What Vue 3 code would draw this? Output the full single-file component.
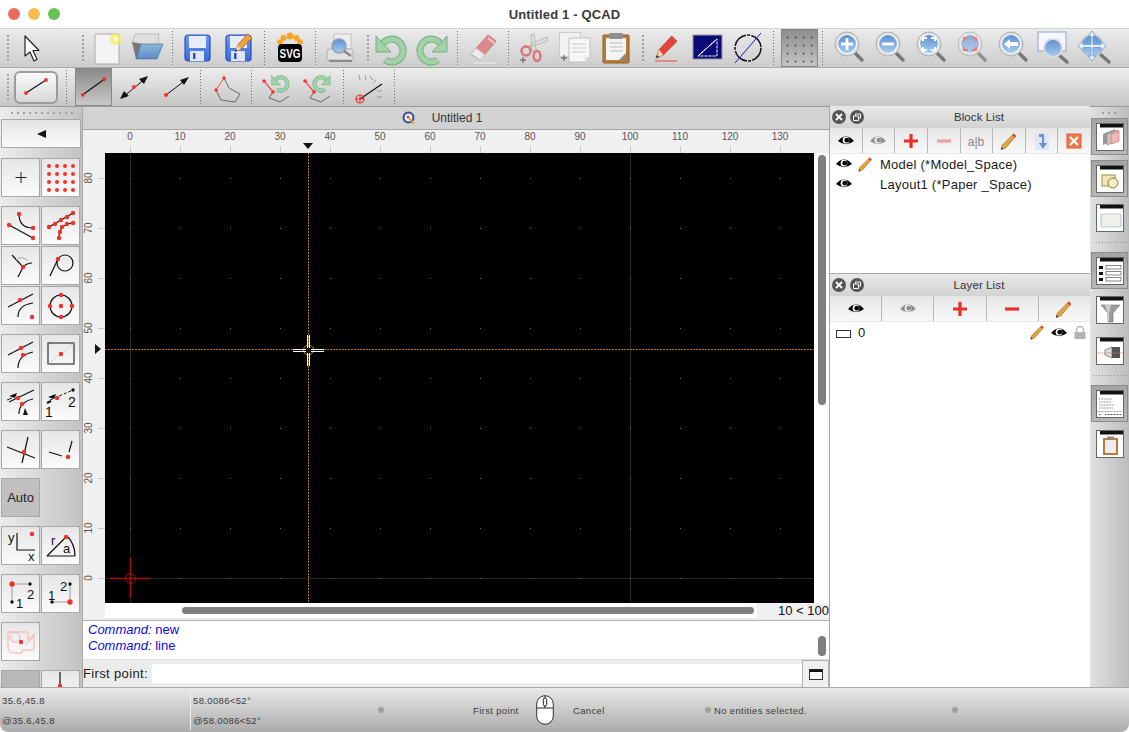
<script setup>
const dot = (x, y, r = 2.2) => `<circle cx="${x}" cy="${y}" r="${r}" fill="#f4302a"/>`
const blk = (x, y, r = 1.7) => `<circle cx="${x}" cy="${y}" r="${r}" fill="#111"/>`
const ln = (d, w = 1.2, c = '#111', extra = '') => `<path d="${d}" fill="none" stroke="${c}" stroke-width="${w}" ${extra}/>`
const txt = (x, y, s, size = 13, c = '#111') => `<text x="${x}" y="${y}" font-size="${size}" fill="${c}" font-family="Liberation Sans, sans-serif">${s}</text>`

const mag = (g, op = 1) => `<g opacity="${op}"><path d="M25 23l7 7" stroke="#777" stroke-width="3.5" stroke-linecap="round"/><circle cx="17" cy="14" r="12" fill="#dcdcdc" stroke="#b0b0b0"/><circle cx="17" cy="14" r="9.5" fill="url(#lens)" stroke="#f4f8fc" stroke-width="1.2"/>${g}</g>`

const floppy = `<rect x="5" y="5" width="25" height="26" rx="3" fill="url(#floppy)" stroke="#2c4cc0" stroke-width="1.2"/><rect x="9" y="6" width="17" height="12" fill="#e6eefb"/><rect x="10" y="21" width="14" height="10" fill="#dfe6f2"/><rect x="13" y="23" width="2.5" height="6" fill="#2c4cc0"/>`
const pencil = (x, y, s = 1, body = '#e8403a') => `<g transform="translate(${x} ${y}) scale(${s})"><path d="M0 22l3-8L15 1l5 5L7 19z" fill="${body}" stroke="#8a4a20" stroke-width=".7"/><path d="M0 22l3-8 4 5z" fill="#f0d5a8"/><path d="M0 22l1-3 2 2z" fill="#222"/></g>`
const oPencil = (x, y, s = 1) => `<g transform="translate(${x} ${y}) scale(${s})"><path d="M0 22l2-6L17 1l3 3L6 20z" fill="#e8a53a" stroke="#8a5a20" stroke-width=".8"/><path d="M17 1l3 3-2 2-3-3z" fill="#e0403a"/><path d="M0 22l1-3 2 2z" fill="#222"/></g>`
const undo = `<g>${ln('M12 30a11.5 11.5 0 1 0 -2 -17', 7, '#74ab80')}${ln('M12 30a11.5 11.5 0 1 0 -2 -17', 5, '#a2d2a8')}<path d="M3 6v16h15z" fill="#a2d2a8" stroke="#74ab80"/></g>`
const redo = `<g transform="translate(36 0) scale(-1 1)">${undo}</g>`
const tail = `${ln('M14 23l-4 6 11 4 9-6', 1, '#666')}${ln('M5 12L14 23', 1.2, '#f05050')}${dot(5, 12, 1.8)}${dot(14, 23, 1.8)}`

const icons = {
  arrow: '<path d="M12 6v20l5-4 4 9 3-1.5-4-9h6z" fill="#fff" stroke="#222" stroke-width="1.2" stroke-linejoin="round"/>',
  new: '<rect x="7" y="4" width="24" height="30" rx="1" fill="#f4f4f4" stroke="#aaa"/><circle cx="28" cy="9" r="6" fill="#f4ee5a" opacity=".75"/><circle cx="28" cy="9" r="2.5" fill="#fffbd0"/>',
  open: '<path d="M3 14l3-10h24l-1 11z" fill="#dedede" stroke="#aaa" stroke-width=".7"/><path d="M3 12l4 17h3l4-15z" fill="#777"/><path d="M12 14h22l-6 15H7z" fill="url(#folder)" stroke="#44688f" stroke-width=".6"/>',
  save: floppy,
  saveas: floppy + pencil(14, 3, .85, '#efa23a'),
  svg: '<g fill="#f6a623"><circle cx="18" cy="6" r="3.5"/><circle cx="11.5" cy="8" r="3"/><circle cx="24.5" cy="8" r="3"/><circle cx="8" cy="12" r="2.8"/><circle cx="28" cy="12" r="2.8"/></g><rect x="6" y="14" width="24" height="18" rx="4" fill="#000"/><text x="18" y="28" text-anchor="middle" font-size="12.5" font-weight="700" fill="#fff" font-family="Liberation Sans, sans-serif" textLength="21" lengthAdjust="spacingAndGlyphs">SVG</text>',
  print: '<rect x="11" y="4" width="17" height="15" fill="#eee" stroke="#c4c4c4"/><path d="M4 22q0-3 3-3h20q3 0 3 3v8H4z" fill="#e2e2e2" stroke="#b0b0b0"/><rect x="6" y="30" width="23" height="2" fill="#8c8c8c"/><circle cx="16" cy="16" r="7" fill="url(#lens)" stroke="#8da0b8" stroke-width="1.5"/><path d="M21 21l7 5" stroke="#888" stroke-width="2.5"/>',
  undo, redo,
  eraser: '<g opacity=".8"><path d="M6 24L23 5l8 6-16 19z" fill="#dd7478" stroke="#c06066"/><path d="M23 8l6 5" stroke="#f4c4c4" stroke-width="2"/><path d="M6 24l5-6 9 7-5 5z" fill="#f0f0f0" stroke="#bbb"/><path d="M8 33h24" stroke="#e8e8e8" stroke-width="1.5"/></g>',
  scissors: '<path d="M13 17L32 11l-1-4-16 7zM20 21L18 4l-3 1 1 16z" fill="#dedede" stroke="#aaa" stroke-width=".7"/><circle cx="10" cy="21" r="4.5" fill="none" stroke="#d87478" stroke-width="2.4"/><ellipse cx="21" cy="26" rx="3.4" ry="5" fill="none" stroke="#d87478" stroke-width="2.4"/><path d="M4 30h6M7 27v6" stroke="#555"/>',
  copy: '<rect x="2.5" y="2.5" width="21" height="24" fill="#f2f2f2" stroke="#ccc"/><path d="M12 8h21v19l-5 5H12z" fill="#f6f6f6" stroke="#c0c0c0"/><path d="M15 14h14M15 18h14M15 22h14" stroke="#ccc"/><path d="M28 32v-5h5z" fill="#ddd"/><path d="M4 28h6M7 25v6" stroke="#555"/>',
  paste: '<rect x="5" y="5" width="26" height="28" rx="1" fill="#b87c3a" stroke="#8e5c24"/><rect x="8" y="8" width="20" height="22" fill="#f4f4f4"/><rect x="11" y="3" width="14" height="6" rx="1" fill="#8f8f8f"/><path d="M12 13h13M12 17h13M12 21h13" stroke="#bbb"/><path d="M21 30l7-7v7z" fill="#888"/>',
  pencil: pencil(8, 5, 1.05) + '<path d="M7 31h22" stroke="#e8403a" stroke-width="1"/>',
  ruler: '<rect x="4" y="5" width="29" height="24" fill="#0a0a78" stroke="#999"/><path d="M9 26L28 9v17z" fill="none" stroke="#fff" stroke-width="1" stroke-dasharray="3 1"/><path d="M9 26L28 9" stroke="#fff"/>',
  circle: '<circle cx="18" cy="18" r="13" fill="none" stroke="#111" stroke-width="1.5" stroke-dasharray="16 1.2 3 1.2"/><path d="M5 33L31 3" stroke="#1515e8"/>',
  gridOn: Array.from({ length: 16 }, (_, i) => `<rect x="${5 + (i % 4) * 8.5}" y="${6 + Math.floor(i / 4) * 8.5}" width="1.6" height="1.6" fill="#333"/>`).join(''),
  zin: mag('<path d="M17 8v12M11 14h12" stroke="#fff" stroke-width="2.8"/>'),
  zout: mag('<path d="M11 14h12" stroke="#fff" stroke-width="2.8"/>'),
  zauto: mag('<path d="M11 11V8h4M19 8h4v3M23 17v3h-4M15 20h-4v-3" fill="none" stroke="#fff" stroke-width="2"/>'),
  zsel: mag('<path d="M11 11V8h4M19 8h4v3M23 17v3h-4M15 20h-4v-3" fill="none" stroke="#f05050" stroke-width="2"/>', .7),
  zback: mag('<path d="M10 14l6-5v3h8v4h-8v3z" fill="#fff"/>'),
  zwin: '<rect x="3" y="2" width="28" height="19" fill="#f4f6fb" stroke="#8da4c8"/><path d="M25 26l7 6" stroke="#777" stroke-width="3.5" stroke-linecap="round"/><circle cx="18" cy="18" r="9" fill="url(#lens)" stroke="#dcdcdc" stroke-width="2"/>',
  zpan: '<path d="M25 25l8 7" stroke="#777" stroke-width="3.5" stroke-linecap="round"/><circle cx="16" cy="16" r="11" fill="url(#lens)" stroke="#c4c4c4" stroke-width="1.5"/><path d="M16 1l4 5h-3v8.5h8v-3l5 4.5-5 4.5v-3h-8V26h3l-4 5-4-5h3v-8.5H7v3L2 16l5-4.5v3h8V6h-3z" fill="#e6eefa" stroke="#6d94c8" stroke-width=".8"/>',

  lineBig: `${ln('M12 22L32 9')}${dot(12, 22, 1.9)}${dot(32, 9, 1.9)}`,
  line2p: `${ln('M7 26L29 10')}${dot(7, 26, 2)}${dot(29, 10, 2)}`,
  lineMid: `${ln('M6 29L30 9', 1)}<path d="M4 30l9-3-5-5zM32 7l-9 3 5 5z" fill="#111"/>${dot(18, 18, 2)}`,
  lineDir: `${ln('M9 26L30 10', 1)}<path d="M32 8l-9 3 4 5z" fill="#111"/>${dot(9, 26, 2)}`,
  polyline: `${ln('M16 9L8 21', 1, '#f05050')}${ln('M8 21l5 10 14 2 5-8-11-6-5-10', 1, '#666')}${dot(16, 9, 1.7)}${dot(8, 21, 1.7)}`,
  backH: `<g transform="translate(11 3) scale(.58)">${undo}</g>${tail}`,
  fwdH: `<g transform="translate(11 3) scale(.58)">${redo}</g>${tail}`,
  snapAng: `${ln('M9 30L31 15')}<circle cx="9" cy="30" r="4" fill="none" stroke="#f4302a" stroke-width="1.2"/><path d="M9 26v8M5 30h8" stroke="#f4302a"/><path d="M8 6l1 5M14 6l1 5M19 7l2.5 4M25 11l-3 3M31 22h-5M31 28h-5" stroke="#999"/>`,

  free: ln('M20 14v11M14.5 19.5h11', 1, '#222'),
  snapGrid: Array.from({ length: 16 }, (_, i) => dot(8 + (i % 4) * 8, 8 + Math.floor(i / 4) * 8, 2)).join(''),
  ends: `${ln('M8 19L32 32')}${ln('M18 8q0 14 14 14')}${dot(8, 19)}${dot(32, 32)}${dot(18, 8)}${dot(32, 22)}`,
  points: `${ln('M8 21L32 7')}${ln('M18 32q0-14 14-15')}${[[8, 21], [14, 18], [20, 14], [26, 11], [32, 7], [18, 32], [19, 26], [21, 21], [26, 18], [32, 17]].map(p => dot(p[0], p[1])).join('')}`,
  inter: `${ln('M11 9L22 21L17 31', 1.2)}${ln('M22 21q4-4 9-4', 1.2)}${ln('M15 14a8 8 0 0 1 12 1', 1, '#aaa')}${dot(22, 21)}`,
  tan: `<circle cx="24" cy="17" r="8" fill="none" stroke="#111" stroke-width="1.2"/>${ln('M9 30L17 13', 1.2)}${dot(17, 13)}`,
  perp: `${ln('M7 21L32 8')}${ln('M17 31q0-12 15-14')}${dot(19, 14)}${dot(31, 31)}`,
  centers: `<circle cx="20" cy="20" r="11" fill="none" stroke="#111" stroke-width="1.2"/>${dot(20, 20)}${dot(20, 9)}${dot(20, 31)}${dot(9, 20)}${dot(31, 20)}`,
  middle: `${ln('M7 21L32 8')}${ln('M17 34q0-13 15-16')}${dot(20, 14)}${dot(22, 21)}`,
  rectc: `<rect x="7" y="9" width="26" height="21" fill="none" stroke="#333" stroke-width="1.2"/>${ln('M7 30L33 9', .8, '#aaa', 'stroke-dasharray="2 2"')}${dot(20, 20)}`,
  dist: `${ln('M8 20L33 8')}${ln('M18 32q0-12 14-15')}<path d="M8 14l8-3-2 5z" fill="#111"/><path d="M6 18l5-2" stroke="#111"/><path d="M24 26l3 7h-5z" fill="#111"/>${dot(17, 16)}${dot(21, 22)}`,
  dist2: `${ln('M9 18L32 8', 1, '#111', 'stroke-dasharray="3 2"')}<path d="M7 15l8-3-2 5z" fill="#111"/><path d="M6 21l4-2" stroke="#111" stroke-width="2"/>${blk(32, 8)}${dot(16, 16)}${txt(27, 25, '2', 14)}${txt(4, 35, '1', 14)}`,
  cross: `${ln('M6 17L34 28')}${ln('M27 7L21 33')}${dot(23, 22)}`,
  along: `${ln('M8 22L21 26')}${ln('M31 11L28 22')}${dot(27, 27)}`,
  coord: `${ln('M16 7V24H34')}${dot(31, 8)}${txt(7, 16, 'y', 13)}${txt(27, 35, 'x', 13)}`,
  polar: `${ln('M6 30L26 10')}${ln('M6 30H34M26 10q8 8 8 20')}${dot(25, 11)}${txt(10, 19, 'r', 13)}${txt(22, 27, 'a', 13)}`,
  rel1: `${ln('M11 10H29M11 10V28', .8, '#888')}${dot(11, 10, 2.7)}${blk(29, 10)}${blk(11, 28)}${txt(26, 25, '2')}${txt(15, 34, '1')}`,
  rel2: `${ln('M29 10V28H11', .8, '#888')}${dot(29, 28, 2.7)}${blk(29, 10)}${blk(11, 28)}${txt(19, 17, '2')}${txt(7, 26, '1')}`,
  restrict: `<path d="M7 10h20v8l6-6v16H21v3H13q-6 0-6-6z" fill="none" stroke="#f4b0ac"/><circle cx="14" cy="15" r="5" fill="none" stroke="#f4b0ac"/><path d="M24 23l9-9" stroke="#f4b0ac"/>${dot(20, 20)}`,
  tick: `${ln('M19 2v12', 1.2)}${dot(19, 16)}`,

  plus: '<path d="M4 10h14M11 3v14" stroke="#e8302a" stroke-width="3.2"/>',
  minus: '<path d="M4 10h14" stroke="#e8302a" stroke-width="3.2"/>',
  rename: `<text x="11" y="15" text-anchor="middle" font-size="12" fill="#888" font-family="Liberation Sans, sans-serif">a|b</text>`,
  edit: oPencil(3, 2, .75),
  editRow: oPencil(1, 0, .95),
  insert: '<rect x="4" y="2" width="14" height="17" fill="#dfe6f5"/><path d="M8 3h5v9h3l-4 6-4-6h3V6H8z" fill="#6c8fd8"/>',
  del: '<rect x="4" y="3" width="14" height="14" fill="#ee7a4c" stroke="#d95c30"/><path d="M7 6l8 8M15 6l-8 8" stroke="#fff" stroke-width="2.2"/>',
  lock: '<path d="M3.5 7V5a3.5 3.5 0 0 1 7 0v2" fill="none" stroke="#b4b4b4" stroke-width="1.5"/><rect x="1.5" y="7" width="11" height="7" fill="#b4b4b4"/>',

  win1: '<path d="M7 22V11l12-5v11z" fill="#999"/><path d="M11 22V11l11-4v11z" fill="#c8c8c8" stroke="#888" stroke-width=".6"/><path d="M15 21V11l8-3v10z" fill="#f0b8b8" stroke="#e06060" stroke-width=".6"/>',
  win2: '<rect x="6" y="10" width="13" height="11" fill="#f2e6b4" stroke="#9a8c50"/><circle cx="17" cy="18" r="5" fill="#f4ecc8" stroke="#8a7c40"/>',
  win3: '<rect x="5" y="10" width="20" height="13" rx="2" fill="#f0f0ea" stroke="#b4c8e6" stroke-width="1.2"/>',
  win4: '<g fill="#111"><rect x="3" y="9" width="4" height="3"/><rect x="3" y="15" width="4" height="3"/><rect x="3" y="21" width="4" height="3"/></g><g fill="#fff" stroke="#555" stroke-width=".7"><rect x="10" y="8.5" width="15" height="3.5"/><rect x="10" y="14.5" width="15" height="3.5"/><rect x="10" y="20.5" width="15" height="3.5"/></g>',
  win5: '<path d="M5 9h19l-7 8v9h-5v-9z" fill="#9c9c9c" stroke="#777" stroke-width=".6"/><path d="M9 9h6l-2 8v8h-1v-8z" fill="#d0d0d0"/>',
  win6: '<path d="M9 13l7-3v11l-7-3z" fill="#ddd" stroke="#666" stroke-width=".7"/><rect x="16" y="10" width="8" height="11" fill="#555"/><path d="M2 16h25" stroke="#ee7070" stroke-width=".8" stroke-dasharray="2 1"/>',
  win7: '<g stroke="#777" stroke-width=".9" stroke-dasharray="1 .6"><path d="M3 9h13M3 12h12M3 15h15M3 18h14"/></g><path d="M1 21.5h25" stroke="#777" stroke-width=".5"/><path d="M3 24.5h2M9 24.5h16" stroke="#555" stroke-dasharray="1 .5"/>',
  win8: '<rect x="7" y="8" width="15" height="17" fill="#b87c3a"/><rect x="9" y="10" width="11" height="13" fill="#eee"/><rect x="11" y="6.5" width="7" height="3" fill="#888"/>'
}

const topBar = ['handle0', 'arrow', 'gap', 'handleS', 'new', 'open', '|', 'save', 'saveas', '|', 'svg', '|', 'print', ':', 'undo', 'redo', '|', 'eraser', '|', 'scissors', 'copy', 'paste', ':', 'pencil', 'ruler', 'circle', '|', 'gridOn', '|', 'zin', 'zout', 'zauto', 'zsel', 'zback', 'zwin', 'zpan']
const secondBar = ['line2p', 'lineMid', 'lineDir', '|', 'polyline', '|', 'backH', 'fwdH', '|', 'snapAng', '|']

const toolGroups = [
  ['free', 'snapGrid'],
  ['ends', 'points', 'inter', 'tan', 'perp', 'centers'],
  ['middle', 'rectc'],
  ['dist', 'dist2'],
  ['cross', 'along'],
  ['AUTO'],
  ['coord', 'polar'],
  ['rel1', 'rel2'],
  ['restrict'],
  ['GRAY', 'tick']
]

const blockTools = [['eye'], ['eye', true], ['plus'], ['minus', true], ['rename'], ['edit'], ['insert'], ['del']]
const layerTools = [['eye'], ['eye', true], ['plus'], ['minus'], ['edit']]

const rightStrip = [
  { g: 'win1', on: true, mb: 5 }, { g: 'win2', on: true, mb: 7 }, { g: 'win3', mb: 0 }, { sep: true },
  { g: 'win4', on: true, mb: 7 }, { g: 'win5', mb: 13 }, { g: 'win6', mb: 0 }, { sep: true },
  { g: 'win7', on: true, mb: 8 }, { g: 'win8', mb: 0 }
]

const xTicks = Array.from({ length: 14 }, (_, i) => i * 10)
const yTicks = Array.from({ length: 9 }, (_, i) => i * 10)
const toX = v => 25 + v * 5
const toY = v => 425 - v * 5
const dots = []
for (let x = -10; x <= 130; x += 10) {
  for (const y of yTicks) dots.push([toX(x), toY(y)])
}
</script>

<template>
  <div class="app">
    <svg class="defs" width="0" height="0">
      <defs>
        <linearGradient id="lens" x1="0" y1="0" x2="0" y2="1">
          <stop offset="0" stop-color="#5b8fd0" />
          <stop offset="1" stop-color="#a8cdf0" />
        </linearGradient>
        <linearGradient id="floppy" x1="0" y1="0" x2="0" y2="1">
          <stop offset="0" stop-color="#6c9cec" />
          <stop offset="1" stop-color="#3a6bd8" />
        </linearGradient>
        <linearGradient id="folder" x1="0" y1="0" x2="0" y2="1">
          <stop offset="0" stop-color="#8fb6dd" />
          <stop offset="1" stop-color="#5a8cc4" />
        </linearGradient>
      </defs>
    </svg>

    <header class="titlebar">
      <div class="lights">
        <span class="light red"></span>
        <span class="light yellow"></span>
        <span class="light green"></span>
      </div>
      <span class="title">Untitled 1 - QCAD</span>
    </header>

    <div class="toolbar">
      <template v-for="(it, i) in topBar" :key="i">
        <span v-if="it === '|'" class="sep"></span>
        <span v-else-if="it === 'handle0'" class="handle"></span>
        <span v-else-if="it === ':'" class="handle mid"></span>
        <span v-else-if="it === 'handleS'" class="handle small"></span>
        <span v-else-if="it === 'gap'" class="gap"></span>
        <span v-else-if="it === 'gridOn'" class="tbtn grid-on">
          <svg width="37" height="37" viewBox="0 0 37 37" v-html="icons[it]"></svg>
        </span>
        <span v-else class="tbtn">
          <svg width="36" height="36" viewBox="0 0 36 36" v-html="icons[it]"></svg>
        </span>
      </template>
    </div>

    <div class="toolbar second">
      <span class="handle"></span>
      <span class="big-btn">
        <svg width="44" height="33" viewBox="0 0 44 33" v-html="icons.lineBig"></svg>
      </span>
      <span class="sep wide"></span>
      <template v-for="(it, i) in secondBar" :key="i">
        <span v-if="it === '|'" class="sep"></span>
        <span v-else class="tbtn" :class="{ checked: i === 0 }">
          <svg width="36" height="36" viewBox="0 0 36 36" v-html="icons[it]"></svg>
        </span>
      </template>
    </div>

    <main class="workspace">
      <aside class="tools">
        <div class="dots-row"></div>
        <button class="back-btn"><span class="back-tri"></span></button>
        <div v-for="(group, g) in toolGroups" :key="g" class="tool-group">
          <template v-for="name in group" :key="name">
            <button v-if="name === 'AUTO'" class="tool auto">Auto</button>
            <button v-else-if="name === 'GRAY'" class="tool gray"></button>
            <button v-else class="tool">
              <svg width="39" height="39" viewBox="0 0 39 39" v-html="icons[name]"></svg>
            </button>
          </template>
        </div>
      </aside>

      <section class="center">
        <div class="mdi-title">
          <svg class="mdi-icon" width="14" height="14" viewBox="0 0 14 14">
            <circle cx="6.5" cy="6.5" r="5" fill="#e4e8ee" stroke="#2f4f8c" stroke-width="2" />
            <path d="M6 6l6 7" stroke="#e89a28" stroke-width="1.8" />
            <circle cx="6" cy="6" r="1.2" fill="#d04030" />
          </svg>
          <span>Untitled 1</span>
        </div>

        <div class="view">
          <div class="corner"></div>
          <svg class="ruler-top" width="709" height="23" viewBox="0 0 709 23">
            <g v-for="v in xTicks" :key="v">
              <text :x="toX(v)" y="10" text-anchor="middle">{{ v }}</text>
              <path :d="`M${toX(v) + .5} 16V23`" stroke="#c8c8c8" />
            </g>
            <path d="M198 13h10l-5 6z" fill="#111" />
          </svg>
          <div class="ruler-fill"></div>

          <svg class="ruler-left" width="22" height="450" viewBox="0 0 22 450">
            <g v-for="v in yTicks" :key="v">
              <text :transform="`translate(9 ${toY(v)}) rotate(-90)`" text-anchor="middle">{{ v }}</text>
              <path :d="`M15 ${toY(v) + .5}H22`" stroke="#c8c8c8" />
            </g>
            <path d="M12 191l6 5-6 5z" fill="#111" />
          </svg>

          <svg class="canvas" width="709" height="450" viewBox="0 0 709 450">
            <rect width="709" height="450" fill="#000" />
            <path d="M25.5 0V450M0 425.5H709" stroke="#262626" />
            <path d="M525.5 0V450" stroke="#2a2a2a" />
            <rect v-for="(d, i) in dots" :key="i" :x="d[0]" :y="d[1]" width="1" height="1" fill="#6a6a6a" />
            <path d="M203.5 0V450M0 196.5H709" stroke="#b07410" stroke-dasharray="2 1" />
            <path d="M25.5 405V445M5 425.5H45" stroke="#a51010" stroke-width="1.5" />
            <circle cx="25.5" cy="425.5" r="5" fill="none" stroke="#a51010" />
            <circle cx="203.5" cy="197" r="5" fill="none" stroke="#c08a20" />
            <path d="M188 196.5H219M188 198.5H219M202.5 182V213M204.5 182V213" stroke="#fff" />
            <rect x="201" y="195" width="5" height="5" fill="#1a1208" />
          </svg>

          <div class="vscroll"><span class="vthumb"></span></div>

          <div class="hscroll">
            <div class="hfill"></div>
            <div class="htrack"><span class="hthumb"></span></div>
            <span class="zoom-label">10 &lt; 100</span>
          </div>
        </div>

        <div class="history">
          <div class="history-text">
            <div><em>Command:</em> new</div>
            <div><em>Command:</em> line</div>
          </div>
          <div class="history-scroll"><span class="history-thumb"></span></div>
        </div>

        <div class="command-line">
          <label>First point:</label>
          <div class="command-input"></div>
          <button class="command-btn">
            <svg width="14" height="11" viewBox="0 0 14 11">
              <rect x=".5" y=".5" width="13" height="10" fill="#fff" stroke="#333" />
              <rect x=".5" y=".5" width="13" height="2.5" fill="#111" />
            </svg>
          </button>
        </div>
      </section>

      <aside class="docks">
        <section class="dock block-dock">
          <div class="dock-head">
            <span class="round-btn"><svg width="10" height="10" viewBox="0 0 10 10"><path d="M2 2l6 6M8 2l-6 6" stroke="#fff" stroke-width="1.8" /></svg></span>
            <span class="round-btn"><svg width="10" height="10" viewBox="0 0 10 10"><path d="M1.5 4h5v4.5h-5zM3.5 3.5V2h5v4H7" fill="none" stroke="#fff" /></svg></span>
            <span class="dock-title">Block List</span>
          </div>
          <div class="dock-tools eight">
            <button v-for="(t, i) in blockTools" :key="i" class="dbtn">
              <svg v-if="t[0] === 'eye'" :class="{ faded: t[1] }" width="16" height="12" viewBox="0 0 20 14">
                <path d="M0 7Q10-4 20 7 10 15 0 7z" fill="#000" />
                <circle cx="10" cy="6" r="4.2" fill="#fff" />
                <circle cx="11" cy="6" r="3" fill="#000" />
              </svg>
              <svg v-else :class="{ faded: t[1] }" width="22" height="20" viewBox="0 0 22 20" v-html="icons[t[0]]"></svg>
            </button>
          </div>
          <ul class="dock-list">
            <li>
              <svg width="16" height="12" viewBox="0 0 20 14"><path d="M0 7Q10-4 20 7 10 15 0 7z" fill="#000" /><circle cx="10" cy="6" r="4.2" fill="#fff" /><circle cx="11" cy="6" r="3" fill="#000" /></svg>
              <svg class="list-pencil" width="15" height="15" viewBox="0 0 22 22" v-html="icons.editRow"></svg>
              <span>Model (*Model_Space)</span>
            </li>
            <li>
              <svg width="16" height="12" viewBox="0 0 20 14"><path d="M0 7Q10-4 20 7 10 15 0 7z" fill="#000" /><circle cx="10" cy="6" r="4.2" fill="#fff" /><circle cx="11" cy="6" r="3" fill="#000" /></svg>
              <span class="list-pencil"></span>
              <span>Layout1 (*Paper _Space)</span>
            </li>
          </ul>
        </section>

        <section class="dock layer-dock">
          <div class="dock-head">
            <span class="round-btn"><svg width="10" height="10" viewBox="0 0 10 10"><path d="M2 2l6 6M8 2l-6 6" stroke="#fff" stroke-width="1.8" /></svg></span>
            <span class="round-btn"><svg width="10" height="10" viewBox="0 0 10 10"><path d="M1.5 4h5v4.5h-5zM3.5 3.5V2h5v4H7" fill="none" stroke="#fff" /></svg></span>
            <span class="dock-title">Layer List</span>
          </div>
          <div class="dock-tools five">
            <button v-for="(t, i) in layerTools" :key="i" class="dbtn">
              <svg v-if="t[0] === 'eye'" :class="{ faded: t[1] }" width="16" height="12" viewBox="0 0 20 14">
                <path d="M0 7Q10-4 20 7 10 15 0 7z" fill="#000" />
                <circle cx="10" cy="6" r="4.2" fill="#fff" />
                <circle cx="11" cy="6" r="3" fill="#000" />
              </svg>
              <svg v-else width="22" height="20" viewBox="0 0 22 20" v-html="icons[t[0]]"></svg>
            </button>
          </div>
          <div class="layer-row">
            <span class="swatch"></span>
            <span class="layer-name">0</span>
            <svg width="15" height="15" viewBox="0 0 22 22" v-html="icons.editRow"></svg>
            <svg class="layer-eye" width="16" height="12" viewBox="0 0 20 14"><path d="M0 7Q10-4 20 7 10 15 0 7z" fill="#000" /><circle cx="10" cy="6" r="4.2" fill="#fff" /><circle cx="11" cy="6" r="3" fill="#000" /></svg>
            <svg width="14" height="14" viewBox="0 0 14 14" v-html="icons.lock"></svg>
          </div>
        </section>
      </aside>

      <aside class="strip">
        <div class="dots-row short"></div>
        <template v-for="(b, i) in rightStrip" :key="i">
          <div v-if="b.sep" class="strip-sep"></div>
          <button v-else class="strip-btn" :class="{ on: b.on }" :style="{ marginBottom: b.mb + 'px' }">
            <svg width="28" height="28" viewBox="0 0 28 28">
              <rect x=".5" y=".5" width="27" height="27" fill="#fff" stroke="#666" />
              <rect x="4" y="1" width="23" height="3.5" fill="#111" />
              <g v-html="icons[b.g]"></g>
            </svg>
          </button>
        </template>
      </aside>
    </main>

    <footer class="status">
      <div class="coords first">
        <span>35.6,45.8</span>
        <span>@35.6,45.8</span>
      </div>
      <div class="coords second-col">
        <span>58.0086&lt;52°</span>
        <span>@58.0086&lt;52°</span>
      </div>
      <span class="led led-a"></span>
      <span class="mouse-l">First point</span>
      <svg class="mouse" width="18" height="30" viewBox="0 0 18 30">
        <rect x=".7" y=".7" width="16.6" height="28.6" rx="8.3" fill="#fff" stroke="#333" />
        <path d="M1 13h16M9 1v12" stroke="#222" />
        <rect x="7.3" y="3" width="3.4" height="8" rx="1.7" fill="#fff" stroke="#222" />
      </svg>
      <span class="mouse-r">Cancel</span>
      <span class="led led-b"></span>
      <span class="sel">No entities selected.</span>
      <span class="led led-c"></span>
    </footer>
  </div>
</template>

<style>
html, body {
  margin: 0;
  background: #fff;
}
</style>

<style scoped>
.app {
  width: 1129px;
  height: 732px;
  display: flex;
  flex-direction: column;
  overflow: hidden;
  font-family: "Liberation Sans", Arial, sans-serif;
  color: #1a1a1a;
  background: #fff;
}

.defs {
  display: block;
  height: 0;
}

button {
  padding: 0;
  font-family: inherit;
}

.titlebar {
  height: 28px;
  flex: none;
  display: flex;
  align-items: center;
  justify-content: center;
  position: relative;
  background: #fff;
}

.lights {
  position: absolute;
  left: 8px;
  top: 8px;
  display: flex;
  gap: 8px;
}

.light {
  width: 12px;
  height: 12px;
  border-radius: 50%;
}

.light.red { background: #ee6a5e; }
.light.yellow { background: #f5bd4f; }
.light.green { background: #61c454; }

.title {
  font-size: 13px;
  font-weight: 700;
  letter-spacing: .15px;
  color: #3a3a3a;
}

.toolbar {
  height: 38px;
  flex: none;
  display: flex;
  align-items: center;
  border-top: 1px solid #d4d4d4;
  background: linear-gradient(#ebebeb, #cdcdcd);
}

.toolbar.second {
  border-top: 1px solid #aaa;
  background: linear-gradient(#ededed, #c6c6c6);
}

.handle {
  width: 10px;
  height: 26px;
  flex: none;
  box-sizing: border-box;
  border-left: 2px dotted #a0a0a0;
  transform: translateX(7px);
}

.handle.mid {
  width: 9px;
  transform: translateX(6px);
}

.handle.small {
  width: 5px;
  transform: translateX(2px);
}

.gap {
  width: 29px;
  flex: none;
}

.sep {
  width: 10px;
  height: 36px;
  flex: none;
  background: radial-gradient(circle, #707070 .6px, transparent .8px) center top / 3px 3px repeat-y;
}

.sep.wide {
  width: 17px;
}

.tbtn {
  width: 41px;
  height: 38px;
  flex: none;
  display: flex;
  align-items: center;
  justify-content: center;
}

.tbtn.grid-on {
  width: 37px;
  margin-left: 2.5px;
  box-sizing: border-box;
  border: 1px solid #888;
  background: linear-gradient(#8c8c8c, #c4c4c4);
}

.tbtn.checked {
  width: 37px;
  margin-right: 1.5px;
  box-sizing: border-box;
  border: 1px solid #888;
  background: linear-gradient(#8a8a8a, #c8c8c8);
}

.big-btn {
  width: 44px;
  height: 33px;
  flex: none;
  margin-left: 4px;
  box-sizing: border-box;
  border: 2px solid #9c9c9c;
  border-radius: 6px;
  background: linear-gradient(#fafafa, #d8d8d8);
  display: flex;
  align-items: center;
  justify-content: center;
}

.big-btn svg {
  flex: none;
}

.workspace {
  flex: 1;
  min-height: 0;
  display: flex;
  border-top: 1px solid #9c9c9c;
}

.tools {
  width: 82px;
  flex: none;
  overflow: hidden;
  box-sizing: border-box;
  padding: 0 0 0 1px;
  background: linear-gradient(90deg, #ececec, #c2c2c2);
}

.dots-row {
  height: 12px;
  margin: 0 8px;
  background: radial-gradient(circle, #a0a0a0 .8px, transparent 1px) left center / 6px 4px repeat-x;
}

.back-btn {
  display: flex;
  align-items: center;
  justify-content: center;
  width: 80px;
  height: 29px;
  margin-bottom: 10px;
  border: 1px solid #a8a8a8;
  background: linear-gradient(#e4e4e4, #fafafa);
}

.back-tri {
  width: 0;
  height: 0;
  border-top: 4.5px solid transparent;
  border-bottom: 4.5px solid transparent;
  border-right: 9px solid #111;
}

.tool-group {
  display: grid;
  grid-template-columns: 39px 39px;
  grid-auto-rows: 39px;
  gap: 1px;
  margin-bottom: 9px;
}

.tool {
  width: 39px;
  height: 39px;
  display: block;
  box-sizing: border-box;
  border: 1px solid #a8a8a8;
  background: linear-gradient(#e6e6e6, #fbfbfb);
  overflow: hidden;
}

.tool svg {
  display: block;
  margin: -1px;
}

.tool.auto {
  background: #c0c0c0;
  font-size: 13px;
  color: #222;
}

.tool.gray {
  background: #b8b8b8;
}

.center {
  width: 748px;
  flex: none;
  display: flex;
  flex-direction: column;
  box-sizing: border-box;
  border-left: 1px solid #a8a8a8;
  border-right: 1px solid #a8a8a8;
  background: #ececec;
}

.mdi-title {
  height: 23px;
  flex: none;
  box-sizing: border-box;
  display: flex;
  align-items: center;
  justify-content: center;
  gap: 16px;
  padding-right: 28px;
  background: #d2d2d2;
  border-bottom: 1px solid #a8a8a8;
  font-size: 12px;
  color: #333;
}

.view {
  flex: none;
  display: grid;
  grid-template-columns: 22px 709px 15px;
  grid-template-rows: 23px 450px 15px;
  background: #f0f0f0;
}

.ruler-top, .ruler-left, .canvas {
  display: block;
}

.ruler-top text, .ruler-left text {
  font-size: 10px;
  fill: #555;
  font-family: "Liberation Sans", Arial, sans-serif;
}

.vscroll {
  background: #fff;
  padding: 2px 3px 0 4px;
  box-sizing: border-box;
}

.vthumb {
  display: block;
  width: 8px;
  height: 250px;
  border-radius: 4px;
  background: #7f7f7f;
}

.hscroll {
  grid-column: 1 / -1;
  display: flex;
  align-items: center;
  height: 15px;
}

.hfill {
  width: 22px;
  flex: none;
  align-self: stretch;
}

.htrack {
  width: 652px;
  flex: none;
  align-self: stretch;
  background: #fff;
  display: flex;
  align-items: center;
  padding-left: 77px;
  box-sizing: border-box;
}

.hthumb {
  display: block;
  width: 572px;
  height: 7px;
  border-radius: 4px;
  background: #7f7f7f;
}

.zoom-label {
  flex: 1;
  text-align: right;
  font-size: 13px;
  white-space: nowrap;
  color: #111;
}

.history {
  height: 38px;
  flex: none;
  display: flex;
  margin-top: 2px;
  background: #fff;
  border-top: 1px solid #b0b0b0;
  border-bottom: 1px solid #ddd;
}

.history-text {
  flex: 1;
  padding: 1px 0 0 5px;
  font-size: 13px;
  line-height: 16px;
  color: #0a0ad8;
}

.history-scroll {
  width: 15px;
  flex: none;
  padding: 15px 3px 0 4px;
  box-sizing: border-box;
}

.history-thumb {
  display: block;
  width: 8px;
  height: 20px;
  border-radius: 4px;
  background: #7f7f7f;
}

.command-line {
  flex: 1;
  display: flex;
  align-items: center;
  min-height: 0;
  font-size: 13px;
  background: #ececec;
}

.command-line label {
  width: 69px;
  flex: none;
  letter-spacing: .35px;
  white-space: nowrap;
  box-sizing: border-box;
}

.command-input {
  width: 650px;
  height: 19px;
  flex: none;
  background: #fff;
}

.command-btn {
  flex: 1;
  align-self: stretch;
  display: flex;
  align-items: center;
  justify-content: center;
  border: 1px solid #b0b0b0;
  border-bottom: none;
  background: #f0f0f0;
}

.docks {
  width: 260px;
  flex: none;
  margin-top: -1px;
  display: flex;
  flex-direction: column;
  background: #e8e8e8;
}

.dock {
  display: flex;
  flex-direction: column;
}

.block-dock {
  height: 168px;
  flex: none;
  border-bottom: 1px solid #aaa;
  box-sizing: border-box;
}

.layer-dock {
  flex: 1;
}

.dock-head {
  height: 22px;
  flex: none;
  display: flex;
  align-items: center;
  gap: 4px;
  padding-left: 2px;
  background: linear-gradient(#e8e8e8, #d2d2d2);
}

.round-btn {
  width: 14px;
  height: 14px;
  border-radius: 50%;
  background: #555;
  display: flex;
  align-items: center;
  justify-content: center;
}

.dock-title {
  flex: 1;
  text-align: center;
  font-size: 11.5px;
  letter-spacing: .1px;
  color: #333;
}

.dock-tools {
  height: 25px;
  flex: none;
  display: grid;
  gap: 1px;
  background: #b8b8b8;
}

.dock-tools.eight {
  grid-template-columns: repeat(8, 1fr);
}

.dock-tools.five {
  grid-template-columns: repeat(5, 1fr);
}

.dbtn {
  border: none;
  display: flex;
  align-items: center;
  justify-content: center;
  background: linear-gradient(#e6e6e6, #f8f8f8);
}

.faded {
  opacity: .4;
}

.dock-list {
  flex: 1;
  margin: 1px 0 0;
  padding: 0;
  list-style: none;
  background: #fff;
  font-size: 13px;
  letter-spacing: .25px;
}

.dock-list li {
  height: 20px;
  display: flex;
  align-items: center;
  padding-left: 6px;
}

.list-pencil {
  width: 15px;
  height: 15px;
  margin: 0 7px 0 6px;
  flex: none;
}

.layer-row {
  flex: 1;
  margin-top: 1px;
  padding: 3px 3px 0 6px;
  background: #fff;
  display: flex;
  align-items: flex-start;
  font-size: 13px;
  line-height: 16px;
}

.swatch {
  width: 15px;
  height: 8px;
  margin: 5px 7px 0 0;
  border: 1px solid #333;
  box-sizing: border-box;
  flex: none;
}

.layer-name {
  flex: 1;
}

.layer-eye {
  margin: 2px 6px 0 6px;
}

.strip {
  flex: 1;
  display: flex;
  flex-direction: column;
  align-items: center;
  background: linear-gradient(90deg, #e2e2e2, #bcbcbc);
}

.strip .dots-row.short {
  align-self: stretch;
  height: 11px;
  margin: 0 10px;
}

.strip-btn {
  width: 37px;
  height: 28px;
  flex: none;
  border: none;
  background: transparent;
  display: flex;
  align-items: center;
  justify-content: center;
}

.strip-btn.on {
  height: 37px;
  border: 1px solid #8c8c8c;
  background: linear-gradient(#a4a4a4, #b8b8b8);
}

.strip-sep {
  align-self: stretch;
  height: 20px;
  flex: none;
  margin: 0 2px;
  background: radial-gradient(circle, #909090 .6px, transparent .8px) left center / 3px 3px repeat-x;
}

.status {
  height: 45px;
  flex: none;
  display: flex;
  align-items: center;
  border-top: 1px solid #aaa;
  border-radius: 0 0 8px 8px;
  background: linear-gradient(#e8e8e8, #acacac);
  font-size: 9.5px;
  letter-spacing: .35px;
  color: #3a3a3a;
  box-sizing: border-box;
}

.coords {
  height: 100%;
  display: flex;
  flex-direction: column;
  justify-content: center;
  gap: 9px;
  box-sizing: border-box;
}

.coords.first {
  width: 190px;
  padding-left: 2px;
  flex: none;
}

.coords.second-col {
  width: 188px;
  flex: none;
  padding-left: 2px;
  border-left: 1px solid #eee;
  height: 40px;
}

.led {
  width: 6px;
  height: 6px;
  flex: none;
  border-radius: 50%;
  background: #a0a0a0;
}

.mouse-l {
  margin-left: 89px;
  width: 63px;
  flex: none;
  white-space: nowrap;
}

.mouse {
  flex: none;
}

.mouse-r {
  width: 132px;
  flex: none;
  margin-left: 19px;
}

.sel {
  width: 238px;
  flex: none;
  margin-left: 3px;
  white-space: nowrap;
}
</style>
